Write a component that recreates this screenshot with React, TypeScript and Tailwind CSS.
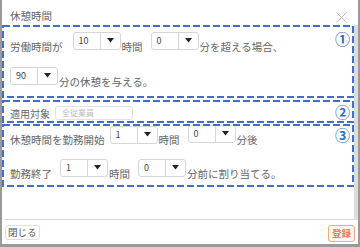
import type { ReactNode } from "react";

const font = { fontFamily: '"Noto Sans CJK JP", "Noto Sans", sans-serif' };

function Caret() {
  return (
    <svg width="7" height="5" viewBox="0 0 7 5">
      <polygon points="0,0 7,0 3.5,4.5" fill="#222" />
    </svg>
  );
}

function Select({ value }: { value: string }) {
  return (
    <div className="flex h-[18px] w-[48px] shrink-0 rounded-[3px] border border-[#d6d6d6] bg-white">
      <span className="flex-1 pl-[5px] pt-[3px] text-[9px] leading-[10px] text-[#444]">{value}</span>
      <span className="flex w-[20px] items-center justify-center border-l border-[#d6d6d6] pb-[2px]">
        <Caret />
      </span>
    </div>
  );
}

function Label({ children }: { children: ReactNode }) {
  return <span className="mt-[9px] whitespace-nowrap text-[10.5px] leading-[12px] text-[#666]">{children}</span>;
}

function DashBox({ mark, markTop, className, children }: { mark: string; markTop: string; className: string; children: ReactNode }) {
  return (
    <div className={`relative ${className}`}>
      {children}
      <svg className="pointer-events-none absolute inset-[1px] h-[calc(100%-2px)] w-[calc(100%-2px)] overflow-visible">
        <rect x="0" y="0" width="100%" height="100%" fill="none" stroke="#3f6fc6" strokeWidth="2" strokeDasharray="7 3" />
      </svg>
      <span className={`absolute right-[4px] ${markTop} text-[15px] font-bold leading-[15px] text-[#2e6fc4]`}>{mark}</span>
    </div>
  );
}

export default function App() {
  return (
    <div style={font} className="relative flex h-[247px] w-[360px] flex-col border-b-[3px] border-l-2 border-r-2 border-[#9a9a9a] bg-white">
      <div className="h-[25px] pl-[8px] pt-[10px] text-[10.5px] leading-[12px] text-[#666]">休憩時間</div>
      <svg className="absolute right-[11px] top-[12px]" width="11" height="11" viewBox="0 0 11 11">
        <path d="M0.5 0.5 L10.5 10.5 M10.5 0.5 L0.5 10.5" stroke="#bbb" strokeWidth="1" />
      </svg>

      <div className="flex h-[194px]">
        <div className="flex flex-1 flex-col">
          <DashBox mark="①" markTop="top-[6px]" className="h-[73px] pl-[8px] pt-[7px]">
            <div className="flex items-start gap-[1px]">
              <Label>労働時間が</Label>
              <span className="ml-[8px]" />
              <Select value="10" />
              <Label>時間</Label>
              <span className="ml-[6px]" />
              <Select value="0" />
              <Label>分を超える場合、</Label>
            </div>
            <div className="mt-[14px] flex items-start gap-[1px]">
              <Select value="90" />
              <Label>分の休憩を与える。</Label>
            </div>
          </DashBox>

          <DashBox mark="②" markTop="top-[4px]" className="mt-[2px] flex h-[23px] items-start gap-[5px] pl-[8px] pt-[6px]">
            <span className="mt-[2px] text-[10px] leading-[11px] text-[#666]">適用対象</span>
            <div className="flex h-[14px] w-[78px] items-center rounded-[3px] border border-[#e2e2e2] pl-[6px] text-[8px] text-[#bbb]">全従業員</div>
          </DashBox>

          <DashBox mark="③" markTop="top-[3px]" className="mt-[1px] h-[63px] pl-[8px] pt-[1px]">
            <div className="flex items-start gap-[1px]">
              <Label>休憩時間を勤務開始</Label>
              <span className="ml-[4px] mt-[1px]">
                <Select value="1" />
              </span>
              <Label>時間</Label>
              <span className="ml-[6px]" />
              <Select value="0" />
              <Label>分後</Label>
            </div>
            <div className="mt-[13px] flex items-start gap-[1px]">
              <Label>勤務終了</Label>
              <span className="ml-[6px]" />
              <Select value="1" />
              <Label>時間</Label>
              <span className="ml-[6px]" />
              <Select value="0" />
              <Label>分前に割り当てる。</Label>
            </div>
          </DashBox>
        </div>
        <div className="w-[4px] bg-[#dcdcdc]" />
      </div>

      <div className="ml-[3px] flex flex-1 items-start justify-between border-t border-[#dadada] pr-[3px] pt-[5px]">
        <button className="h-[15px] rounded-[3px] border border-[#e0e0e0] px-[2px] text-[9.5px] leading-[13px] text-[#555]">閉じる</button>
        <button className="h-[17px] rounded-[3px] border border-[#f5a77e] bg-[#fff6f0] px-[3px] text-[9.5px] font-bold leading-[15px] text-[#ee7d56]">登録</button>
      </div>
    </div>
  );
}
